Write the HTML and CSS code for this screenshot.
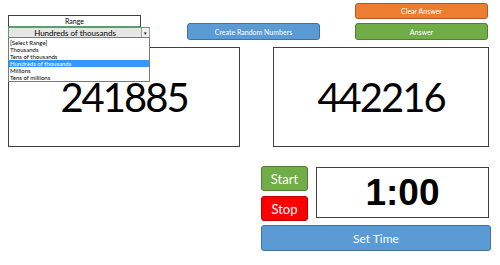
FILE: index.html
```html
<!DOCTYPE html>
<html lang="en">
<head>
    <meta charset="UTF-8">
    <title>Random Numbers</title>
    <link rel="stylesheet" href="styles.css">
</head>
<body>

<div class="sheet">
    <div class="top-row">
        <div class="range">
            <div class="range-title">Range</div>
            <div class="range-select">
                <span class="range-value">Hundreds of thousands</span>
                <span class="range-arrow">&#9662;</span>
            </div>
            <ul class="range-list">
                <li>[Select Range]</li>
                <li>Thousands</li>
                <li>Tens of thousands</li>
                <li class="selected">Hundreds of thousands</li>
                <li>Millions</li>
                <li>Tens of millions</li>
            </ul>
        </div>

        <button class="btn btn-blue btn-create">Create Random Numbers</button>

        <div class="answer-col">
            <button class="btn btn-orange">Clear Answer</button>
            <button class="btn btn-green">Answer</button>
        </div>
    </div>

    <div class="number-row">
        <div class="number-box left-box">241885</div>
        <div class="number-box right-box">442216</div>
    </div>

    <div class="timer-area">
        <div class="timer-row">
            <div class="timer-buttons">
                <button class="btn btn-green big">Start</button>
                <button class="btn btn-red big">Stop</button>
            </div>
            <div class="timer-box">1:00</div>
        </div>
        <button class="btn btn-blue big set-time">Set Time</button>
    </div>
</div>

</body>
</html>
```

FILE: styles.css
```css
body {
    margin: 0;
    background-color: #ffffff;
    font-family: Lato, "Open Sans", sans-serif;
    color: #000000;
}

.sheet {
    width: 500px;
    height: 265px;
    position: relative;
}

.top-row {
    display: flex;
    height: 47px;
}

.btn {
    border: 1px solid #41719c;
    border-radius: 3px;
    color: #ffffff;
    font-family: Lato, "Open Sans", sans-serif;
    font-size: 7px;
    padding: 0;
    cursor: pointer;
}

.btn-blue {
    background-color: #5b9bd5;
}

.btn-orange {
    background-color: #ed7d31;
    border-color: #ae5a21;
}

.btn-green {
    background-color: #70ad47;
    border-color: #507e32;
}

.btn-red {
    background-color: #ff0000;
    border-color: #c00000;
}

.big {
    font-size: 13px;
}

/* range dropdown */
.range {
    position: relative;
    margin: 15px 0 0 8px;
    width: 142px;
}

.range-title {
    width: 131px;
    height: 10px;
    border: 1px solid #404040;
    border-bottom: 1px solid #5a9e6f;
    font-size: 7px;
    line-height: 10px;
    text-align: center;
}

.range-select {
    display: flex;
    height: 10px;
    border: 1px solid #5a9e6f;
    border-right-color: #a0a0a0;
    background-color: #e6e6e6;
    font-size: 8px;
    line-height: 10px;
}

.range-value {
    flex: 1;
    text-align: center;
}

.range-arrow {
    width: 7px;
    border-left: 1px solid #a0a0a0;
    background-color: #f0f0f0;
    font-size: 5px;
    text-align: center;
}

.range-list {
    position: absolute;
    top: 22px;
    left: 0;
    width: 140px;
    margin: 0;
    padding: 1px 0 0 0;
    list-style-type: none;
    background-color: #ffffff;
    border: 1px solid #7a7a7a;
    z-index: 10;
    font-size: 6px;
}

.range-list li {
    height: 7px;
    line-height: 7px;
    padding-left: 1px;
}

.range-list .selected {
    background-color: #3399ff;
    color: #ffffff;
}

.btn-create {
    margin: 23px 0 0 37px;
    width: 133px;
    height: 17px;
}

.answer-col {
    display: flex;
    flex-direction: column;
    gap: 4px;
    margin: 3px 0 0 35px;
    width: 133px;
}

.answer-col .btn-orange {
    height: 16px;
}

.answer-col .btn-green {
    height: 17px;
}

/* number boxes */
.number-row {
    display: flex;
    gap: 33px;
    padding-left: 8px;
}

.number-box {
    height: 98px;
    border: 1px solid #404040;
    display: flex;
    align-items: center;
    justify-content: center;
    font-size: 40px;
    letter-spacing: -2px;
}

.left-box {
    width: 230px;
}

.right-box {
    width: 214px;
}

/* timer */
.timer-area {
    margin: 19px 0 0 261px;
    width: 230px;
}

.timer-row {
    display: flex;
    gap: 8px;
}

.timer-buttons {
    display: flex;
    flex-direction: column;
    gap: 5px;
}

.timer-buttons .btn {
    width: 47px;
    height: 25px;
}

.timer-box {
    margin-top: 1px;
    width: 171px;
    height: 49px;
    border: 1px solid #404040;
    display: flex;
    align-items: center;
    justify-content: center;
    font-family: "Liberation Sans", Arial, sans-serif;
    font-weight: bold;
    font-size: 37px;
}

.set-time {
    margin-top: 4px;
    width: 230px;
    height: 26px;
    font-size: 12px;
}
```
